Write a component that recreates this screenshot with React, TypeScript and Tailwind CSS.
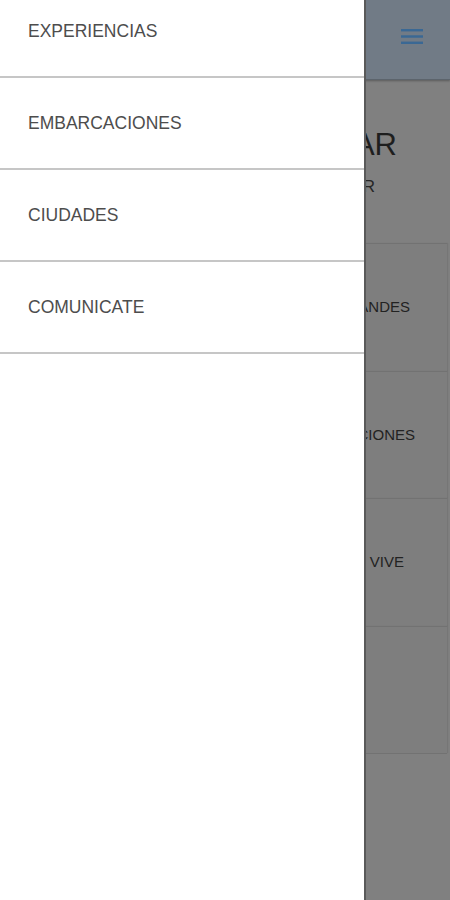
import React from "react";

const items = ["EXPERIENCIAS", "EMBARCACIONES", "CIUDADES", "COMUNICATE"];

const cards = [
  { text: "LOS ANDES", pr: "pr-[37px]" },
  { text: "EMBARCACIONES", pr: "pr-[32px]" },
  { text: "DISFRUTA Y VIVE", pr: "pr-[43px]" },
  { text: "", pr: "pr-[40px]" },
];

export default function App() {
  return (
    <div
      className="relative w-[450px] h-[900px] overflow-hidden bg-[#808080]"
      style={{ fontFamily: '"Liberation Sans", Arial, sans-serif' }}
    >
      {/* underlying page (dimmed) */}
      <div className="flex flex-col w-full h-full">
        <div className="h-[80px] bg-[#717b86] flex items-center justify-end pr-[27px] border-b border-[#5c646c] shadow-[0_1px_2px_rgba(0,0,0,0.3)]">
          <svg width="22" height="17" viewBox="0 0 22 17" className="mt-[-7px]">
            <rect x="0" y="1" width="22" height="2.4" fill="#3a6894" />
            <rect x="0" y="7.3" width="22" height="2.4" fill="#3a6894" />
            <rect x="0" y="13.6" width="22" height="2.4" fill="#3a6894" />
          </svg>
        </div>
        <div className="flex flex-col items-end pr-[53px] pt-[47px]">
          <div className="text-[31px] leading-[36px] text-[#1e1e1e]">NAVEGAR</div>
        </div>
        <div className="flex flex-col items-end pr-[75px] pt-[14px]">
          <div className="text-[17px] leading-[20px] text-[#262626]">EXPLORAR</div>
        </div>
        <div className="flex flex-col mt-[46px] mr-[3px] ml-[3px]">
          {cards.map((c, i) => (
            <div
              key={i}
              className={`h-[127.5px] flex items-center justify-end ${c.pr} bg-[#7e7e7e] border-t border-[#727272] shadow-[1px_0_1px_rgba(0,0,0,0.08)]`}
            >
              <span className="text-[15px] text-[#222222]">{c.text}</span>
            </div>
          ))}
          <div className="border-t border-[#727272]" />
        </div>
      </div>

      {/* drawer */}
      <div className="absolute top-0 left-0 w-[366px] h-[900px] bg-white border-r-2 border-[#5a5a5a] overflow-hidden">
        <div className="flex flex-col mt-[-14px]">
          {items.map((t) => (
            <div
              key={t}
              className="h-[92px] flex items-center pl-[28px] border-b-2 border-[#c6c6c6]"
            >
              <span className="text-[17.5px] leading-[20px] text-[#4d4d4d] scale-y-[1.08]">
                {t}
              </span>
            </div>
          ))}
        </div>
      </div>
    </div>
  );
}
